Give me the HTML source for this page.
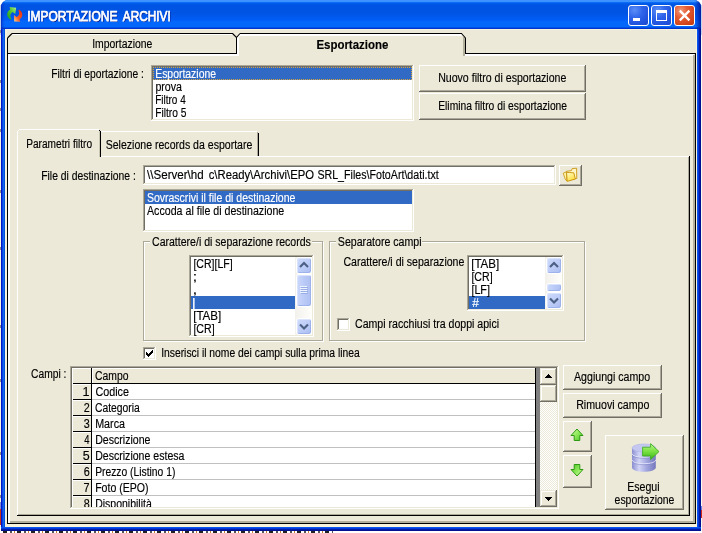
<!DOCTYPE html>
<html lang="it"><head><meta charset="utf-8"><title>IMPORTAZIONE ARCHIVI</title>
<style>
html,body{margin:0;padding:0}
body{width:702px;height:533px;overflow:hidden;position:relative;background:#fff;font-family:"Liberation Sans",sans-serif}
#root{position:absolute;left:0;top:0;width:702px;height:533px;overflow:hidden;will-change:transform}
#root div,#root svg,#root span{position:absolute;display:block}
.t{white-space:pre;transform-origin:0 0;font-family:"Liberation Sans",sans-serif;-webkit-text-stroke:0.15px currentColor}
#win{left:1px;top:0;width:700px;height:531px;border-radius:7px 7px 0 0;
 background:linear-gradient(90deg,#0019CF 0,#0019CF 1px,#0A45E0 1px,#0A45E0 2px,#1666EE 2px,#1666EE 3px,#0050E0 3px,#0050E0 696px,#0A55F0 696px,#0A55F0 697px,#0538D8 697px,#0538D8 698px,#001CA8 698px,#001CA8 699px,#001090 699px)}
#wbot{left:1px;top:527px;width:700px;height:4px;background:linear-gradient(180deg,#0A55F0 0,#0A55F0 1px,#0538D8 1px,#0538D8 2px,#001CA8 2px,#001CA8 3px,#001090 3px)}
#tbar{left:1px;top:0;width:700px;height:29px;border-radius:7px 7px 0 0;
 background:linear-gradient(180deg,#3C92FF 0,#3C92FF 2px,#0A6CF5 2.5px,#005CEB 3.5px,#0056E4 4.5px,#0054E3 5.5px,#0054E3 13px,#005DF6 20px,#0467FC 21.5px,#0467FC 26.5px,#0052E4 27.5px,#0033CF 28.5px,#0033CF 29px)}
#tbarL{left:1px;top:0;width:12px;height:29px;border-radius:7px 0 0 0;background:linear-gradient(90deg,rgba(0,24,170,0.75) 0,rgba(0,40,200,0.35) 1.5px,rgba(0,60,220,0) 4px)}
#tbarR{left:661px;top:0;width:40px;height:29px;border-radius:0 7px 0 0;background:linear-gradient(90deg,rgba(0,20,150,0) 0,rgba(0,20,150,0) 34px,rgba(0,20,150,0.55) 38px,rgba(0,16,140,0.8) 40px)}
</style></head>
<body><div id="root">
<div style="left:0px;top:0px;width:702px;height:533px;background:#fff;"></div>
<div style="left:0px;top:6px;width:1px;height:521px;background:#F6F3E4;"></div>
<div style="left:0px;top:5px;width:1px;height:30px;background:#C4D4F0;"></div>
<div style="left:0px;top:30px;width:1px;height:3px;background:#8A8A8A;"></div>
<div style="left:0px;top:80px;width:1px;height:3px;background:#8A8A8A;"></div>
<div style="left:0px;top:108px;width:1px;height:3px;background:#8A8A8A;"></div>
<div style="left:0px;top:129px;width:1px;height:3px;background:#8A8A8A;"></div>
<div style="left:0px;top:190px;width:1px;height:3px;background:#8A8A8A;"></div>
<div style="left:0px;top:247px;width:1px;height:3px;background:#8A8A8A;"></div>
<div style="left:0px;top:325px;width:1px;height:3px;background:#8A8A8A;"></div>
<div style="left:0px;top:379px;width:1px;height:3px;background:#8A8A8A;"></div>
<div style="left:0px;top:452px;width:1px;height:3px;background:#8A8A8A;"></div>
<div style="left:0px;top:495px;width:1px;height:3px;background:#8A8A8A;"></div>
<div style="left:0px;top:502px;width:1px;height:7px;background:#8088D8;"></div>
<div style="left:0px;top:509px;width:1px;height:16px;background:#C83018;"></div>
<div style="left:701px;top:6px;width:1px;height:525px;background:#FBFAF2;"></div>
<div style="left:701px;top:5px;width:1px;height:30px;background:#C4D4F0;"></div>
<div style="left:701px;top:506px;width:1px;height:4px;background:#7080E0;"></div>
<div style="left:701px;top:510px;width:1px;height:8px;background:#D02818;"></div>
<div style="left:3px;top:531px;width:330px;height:2px;background:repeating-linear-gradient(90deg,#222 0 4px,#fff 4px 7px,#555 7px 9px,#fff 9px 11px,#C08030 11px 12px,#fff 12px 14px)"></div>
<div id="win"></div>
<div id="wbot"></div>
<div id="tbar"></div>
<div id="tbarL"></div>
<div id="tbarR"></div>
<div style="left:5px;top:29px;width:692px;height:498px;background:#F8F3DC;"></div>
<div style="left:7px;top:30px;width:689px;height:494px;background:#ECE9D8;"></div>
<svg style="left:0;top:0" width="30" height="30" viewBox="0 0 30 30">
<defs><linearGradient id="tg" x1="0" y1="1" x2="1" y2="0"><stop offset="0" stop-color="#1E9A12"/><stop offset="0.6" stop-color="#5CC83A"/><stop offset="1" stop-color="#B4F08C"/></linearGradient>
<linearGradient id="tr" x1="1" y1="0" x2="0" y2="1"><stop offset="0" stop-color="#E8280C"/><stop offset="0.6" stop-color="#F85A20"/><stop offset="1" stop-color="#FFD890"/></linearGradient></defs>
<path d="M10.6 19.8 C6.2 17 6 12.2 10.2 9.6 L9.6 7 L16.2 7.8 L15.2 14 L12.6 12 C10 13.6 9.6 16.4 11.4 19 Z" fill="url(#tg)"/>
<path d="M19.2 9.6 C23.4 12.6 23.2 17.2 19.6 19.4 L20.2 21.8 L14.2 21.4 L14 15 L16.6 17 C19.4 15.6 19.8 13 18.4 10.4 Z" fill="url(#tr)"/>
</svg>
<span class="t" style="left:27px;top:8px;color:#fff;font-size:14px;line-height:16px;transform:translateX(0.14px) scaleX(0.8582);text-shadow:1px 1px 0 #0A1883;-webkit-text-stroke:0.75px #fff">IMPORTAZIONE </span>
<span class="t" style="left:122px;top:8px;color:#fff;font-size:14px;line-height:16px;transform:translateX(0.84px) scaleX(0.8422);text-shadow:1px 1px 0 #0A1883;-webkit-text-stroke:0.75px #fff">ARCHIVI</span>
<div style="left:628px;top:5px;width:21px;height:21px;box-sizing:border-box;border:1px solid #fff;border-radius:3px;background:radial-gradient(circle at 30% 22%,#5A8EF8 0,#2E64EA 40%,#2052DC 75%,#1C49CC 100%)"></div>
<div style="left:633px;top:18px;width:7px;height:3px;background:#fff;"></div>
<div style="left:651px;top:5px;width:21px;height:21px;box-sizing:border-box;border:1px solid #fff;border-radius:3px;background:radial-gradient(circle at 30% 22%,#5A8EF8 0,#2E64EA 40%,#2052DC 75%,#1C49CC 100%)"></div>
<div style="left:656px;top:10px;width:11px;height:11px;box-sizing:border-box;border:1px solid #fff;border-top-width:3px"></div>
<div style="left:674px;top:5px;width:21px;height:21px;box-sizing:border-box;border:1px solid #fff;border-radius:3px;background:radial-gradient(circle at 30% 25%,#F09A7C 0,#E45C34 35%,#D2441A 75%,#BC3610 100%)"></div>
<svg style="left:674px;top:5px" width="21" height="21" viewBox="0 0 21 21"><path d="M5.8 5.6 L15.4 15.4 M15.4 5.6 L5.8 15.4" stroke="#fff" stroke-width="2.3" stroke-linecap="butt"/></svg>
<svg style="left:0;top:0" width="702" height="533" viewBox="0 0 702 533" shape-rendering="crispEdges" fill="none">
<!-- white highlights -->
<path d="M9 523 V54" stroke="#fff" stroke-width="2"/>
<path d="M8 55 H237" stroke="#fff" stroke-width="2"/>
<path d="M12 34.5 H234" stroke="#fff"/>
<path d="M9.5 37 V53" stroke="#fff" stroke-opacity="0"/>
<path d="M238 56 V37" stroke="#fff" stroke-width="2"/>
<path d="M239 35 H462" stroke="#fff" stroke-width="2"/>
<path d="M465 55 H694" stroke="#fff" stroke-width="2"/>
<!-- gray shadows -->
<path d="M694 55 V523" stroke="#B3B09E" stroke-width="2"/>
<path d="M10 522 H695" stroke="#B3B09E" stroke-width="2"/>
<path d="M464 37 V56" stroke="#B3B09E" stroke-width="2"/>
<!-- black outline -->
<path d="M7.5 524 V38" stroke="#000"/>
<path d="M12 33.5 H233" stroke="#000"/>
<path d="M240 33.5 H462" stroke="#000"/>
<path d="M236.5 37 V54" stroke="#000"/>
<path d="M7 53.5 H237" stroke="#000"/>
<path d="M465.5 38 V54" stroke="#000"/>
<path d="M465 53.5 H696" stroke="#000"/>
<path d="M695.5 53 V524" stroke="#000"/>
<path d="M7 523.5 H696" stroke="#000"/>
</svg>
<svg style="left:0;top:0" width="702" height="60" viewBox="0 0 702 60" fill="none" stroke="#000" stroke-width="1.1">
<path d="M239.5 35 L237.5 38" stroke="#fff" stroke-width="1.6"/>
<path d="M7.5 38 L12 33.5"/>
<path d="M232.5 33.5 L236.5 37.5 L240 33.5"/>
<path d="M461.5 33.5 L465.5 38"/>
</svg>
<span class="t" style="left:92px;top:37px;color:#000;font-size:12px;line-height:14px;transform:translateX(0.13px) scaleX(0.8676)">Importazione</span>
<span class="t" style="left:316px;top:38px;color:#000;font-size:12px;line-height:14px;transform:translateX(0.43px) scaleX(0.9540);font-weight:bold">Esportazione</span>
<span class="t" style="left:51px;top:67px;color:#000;font-size:12px;line-height:14px;transform:translateX(0.19px) scaleX(0.8578)">Filtri di eportazione :</span>
<div style="left:151px;top:65px;width:263px;height:56px;background:#fff;"></div>
<div style="left:151px;top:65px;width:262px;height:55px;background:#ACA899;"></div>
<div style="left:152px;top:66px;width:261px;height:54px;background:#ECE9D8;"></div>
<div style="left:152px;top:66px;width:260px;height:53px;background:#716F64;"></div>
<div style="left:153px;top:67px;width:259px;height:52px;background:#fff;"></div>
<div style="left:153px;top:67px;width:259px;height:13px;background:#316AC5;outline:1px dotted #D9A53A;outline-offset:-1px"></div>
<span class="t" style="left:155px;top:67px;color:#fff;font-size:12px;line-height:14px;transform:translateX(0.18px) scaleX(0.8689)">Esportazione</span>
<span class="t" style="left:155px;top:80px;color:#000;font-size:12px;line-height:14px;transform:translateX(0.38px) scaleX(0.8873)">prova</span>
<span class="t" style="left:155px;top:93px;color:#000;font-size:12px;line-height:14px;transform:translateX(0.21px) scaleX(0.8321)">Filtro 4</span>
<span class="t" style="left:155px;top:106px;color:#000;font-size:12px;line-height:14px;transform:translateX(0.19px) scaleX(0.8506)">Filtro 5</span>
<div style="left:419px;top:65px;width:167px;height:27px;background:#716F64;"></div>
<div style="left:419px;top:65px;width:166px;height:26px;background:#fff;"></div>
<div style="left:420px;top:66px;width:165px;height:25px;background:#ACA899;"></div>
<div style="left:420px;top:66px;width:164px;height:24px;background:#ECE9D8;"></div>
<span class="t" style="left:438px;top:71px;color:#000;font-size:12px;line-height:14px;transform:translateX(0.17px) scaleX(0.8816)">Nuovo filtro di esportazione</span>
<div style="left:419px;top:93px;width:167px;height:27px;background:#716F64;"></div>
<div style="left:419px;top:93px;width:166px;height:26px;background:#fff;"></div>
<div style="left:420px;top:94px;width:165px;height:25px;background:#ACA899;"></div>
<div style="left:420px;top:94px;width:164px;height:24px;background:#ECE9D8;"></div>
<span class="t" style="left:438px;top:99px;color:#000;font-size:12px;line-height:14px;transform:translateX(0.19px) scaleX(0.8588)">Elimina filtro di esportazione</span>
<svg style="left:0;top:0" width="702" height="533" viewBox="0 0 702 533" shape-rendering="crispEdges" fill="none">
<!-- page -->
<path d="M101 156.5 H689" stroke="#fff"/>
<path d="M17.5 131 V515" stroke="#fff"/>
<path d="M688.5 157 V514.5 H18" stroke="#ACA899"/>
<path d="M689.5 156 V515.5 H17" stroke="#000"/>
<!-- tab 1 (selected) -->
<path d="M19 129.5 H99" stroke="#fff"/>
<path d="M18.5 130 V131" stroke="#fff"/>
<path d="M99.5 130 V131" stroke="#000"/>
<path d="M99.5 131 V157" stroke="#C9C6B4"/>
<path d="M100.5 131 V157" stroke="#000"/>
<!-- tab 2 -->
<path d="M101 131.5 H257" stroke="#fff"/>
<path d="M257.5 132 V156" stroke="#ACA899"/>
<path d="M258.5 133 V156" stroke="#000"/>
</svg>
<span class="t" style="left:26px;top:137px;color:#000;font-size:12px;line-height:14px;transform:translateX(0.20px) scaleX(0.8436)">Parametri filtro</span>
<span class="t" style="left:105px;top:138px;color:#000;font-size:12px;line-height:14px;transform:translateX(0.70px) scaleX(0.8793)">Selezione records da esportare</span>
<span class="t" style="left:41px;top:169px;color:#000;font-size:12px;line-height:14px;transform:translateX(0.18px) scaleX(0.8646)">File di destinazione :</span>
<div style="left:143px;top:165px;width:413px;height:20px;background:#fff;"></div>
<div style="left:143px;top:165px;width:412px;height:19px;background:#ACA899;"></div>
<div style="left:144px;top:166px;width:411px;height:18px;background:#ECE9D8;"></div>
<div style="left:144px;top:166px;width:410px;height:17px;background:#716F64;"></div>
<div style="left:145px;top:167px;width:409px;height:16px;background:#fff;"></div>
<span class="t" style="left:147px;top:168px;color:#000;font-size:12px;line-height:14px;transform:translateX(0.09px) scaleX(0.9640)">\\Server\hd </span>
<span class="t" style="left:208px;top:168px;color:#000;font-size:12px;line-height:14px;transform:translateX(0.71px) scaleX(0.9401)">c\Ready\Archivi\EPO </span>
<span class="t" style="left:317px;top:168px;color:#000;font-size:12px;line-height:14px;transform:translateX(0.38px) scaleX(0.8877)">SRL_Files\FotoArt\dati.txt</span>
<div style="left:559px;top:165px;width:23px;height:21px;background:#716F64;"></div>
<div style="left:559px;top:165px;width:22px;height:20px;background:#fff;"></div>
<div style="left:560px;top:166px;width:21px;height:19px;background:#ACA899;"></div>
<div style="left:560px;top:166px;width:20px;height:18px;background:#ECE9D8;"></div>
<svg style="left:546px;top:160px" width="44" height="30" viewBox="0 0 44 30">
<defs><linearGradient id="ff" x1="0" y1="0" x2="0.6" y2="1"><stop offset="0" stop-color="#FFFDE0"/><stop offset="0.5" stop-color="#FFEE80"/><stop offset="1" stop-color="#FFD93A"/></linearGradient></defs>
<path d="M20.2 11.4 L25.4 10.6 L26.2 8.6 L30.6 8.2 L30.8 18.4 L21.4 20.6 Z" fill="#FFF6C8" stroke="#C8940C" stroke-width="0.9" stroke-linejoin="round"/>
<path d="M17.2 13.2 L20.4 12 L21 21 L19.4 19.6 Z" fill="#FFF0A8" stroke="#C8940C" stroke-width="0.8" stroke-linejoin="round"/>
<path d="M20.6 12.4 L27.8 12.8 L29.4 19 L21.2 21.4 Z" fill="url(#ff)" stroke="#C8940C" stroke-width="0.9" stroke-linejoin="round"/>
</svg>
<div style="left:143px;top:189px;width:271px;height:43px;background:#fff;"></div>
<div style="left:143px;top:189px;width:270px;height:42px;background:#ACA899;"></div>
<div style="left:144px;top:190px;width:269px;height:41px;background:#ECE9D8;"></div>
<div style="left:144px;top:190px;width:268px;height:40px;background:#716F64;"></div>
<div style="left:145px;top:191px;width:267px;height:39px;background:#fff;"></div>
<div style="left:145px;top:191px;width:267px;height:13px;background:#316AC5;"></div>
<span class="t" style="left:146px;top:191px;color:#fff;font-size:12px;line-height:14px;transform:translateX(0.88px) scaleX(0.8765)">Sovrascrivi il file di destinazione</span>
<span class="t" style="left:147px;top:204px;color:#000;font-size:12px;line-height:14px;transform:translateX(0.02px) scaleX(0.8868)">Accoda al file di destinazione</span>
<div style="left:144px;top:242px;width:180px;height:100px;background:transparent;border:1px solid #fff;box-sizing:border-box"></div>
<div style="left:143px;top:241px;width:180px;height:100px;background:transparent;border:1px solid #ACA899;box-sizing:border-box"></div>
<div style="left:150px;top:236px;width:162px;height:12px;background:#ECE9D8;"></div>
<span class="t" style="left:152px;top:235px;color:#000;font-size:12px;line-height:14px;transform:translateX(0.02px) scaleX(0.8787)">Carattere/i di separazione records</span>
<div style="left:189px;top:255px;width:125px;height:82px;background:#fff;"></div>
<div style="left:189px;top:255px;width:124px;height:81px;background:#ACA899;"></div>
<div style="left:190px;top:256px;width:123px;height:80px;background:#ECE9D8;"></div>
<div style="left:190px;top:256px;width:122px;height:79px;background:#716F64;"></div>
<div style="left:191px;top:257px;width:121px;height:78px;background:#fff;"></div>
<div style="left:295px;top:257px;width:17px;height:78px;background:linear-gradient(90deg,#F3F1EC,#FEFEFB);"></div>
<div style="left:191px;top:296px;width:104px;height:13px;background:#316AC5;"></div>
<span class="t" style="left:193px;top:257px;color:#000;font-size:12px;line-height:14px;transform:translateX(0.43px) scaleX(0.8766)">[CR][LF]</span>
<span class="t" style="left:192px;top:270px;color:#000;font-size:12px;line-height:14px;transform:translateX(0.70px) scaleX(1.3000)">;</span>
<span class="t" style="left:192px;top:283px;color:#000;font-size:12px;line-height:14px;transform:translateX(0.70px) scaleX(1.3000)">,</span>
<span class="t" style="left:191px;top:296px;color:#fff;font-size:12px;line-height:14px;transform:translateX(0.70px) scaleX(1.3000)">|</span>
<span class="t" style="left:193px;top:309px;color:#000;font-size:12px;line-height:14px;transform:translateX(0.16px) scaleX(0.9646)">[TAB]</span>
<span class="t" style="left:193px;top:322px;color:#000;font-size:12px;line-height:14px;transform:translateX(0.38px) scaleX(0.8847)">[CR]</span>
<div style="left:296px;top:257px;width:16px;height:17px;box-sizing:border-box;border:1px solid #fff;border-radius:3px;background:linear-gradient(135deg,#CFDBFB,#BCCCF8 55%,#AABDF0);box-shadow:inset -1px -1px 0 0 #9DB2EA,inset 1px 1px 0 0 #D9E3FC"></div>
<svg style="left:295px;top:257px" width="17" height="17" viewBox="0 0 17 17"><path d="M5 10 L9 6 L13 10" fill="none" stroke="#4D6185" stroke-width="2.2"/></svg>
<div style="left:296px;top:274px;width:16px;height:33px;box-sizing:border-box;border:1px solid #fff;border-radius:3px;background:linear-gradient(90deg,#CBD8FB,#BACAF7 50%,#AEC0F2);box-shadow:inset -1px -1px 0 0 #9DB2EA,inset 1px 1px 0 0 #D9E3FC"></div>
<div style="left:300px;top:286px;width:7px;height:1px;background:#EEF4FE;"></div>
<div style="left:301px;top:287px;width:7px;height:1px;background:#98ACE6;"></div>
<div style="left:300px;top:288px;width:7px;height:1px;background:#EEF4FE;"></div>
<div style="left:301px;top:289px;width:7px;height:1px;background:#98ACE6;"></div>
<div style="left:300px;top:290px;width:7px;height:1px;background:#EEF4FE;"></div>
<div style="left:301px;top:291px;width:7px;height:1px;background:#98ACE6;"></div>
<div style="left:300px;top:292px;width:7px;height:1px;background:#EEF4FE;"></div>
<div style="left:301px;top:293px;width:7px;height:1px;background:#98ACE6;"></div>
<div style="left:296px;top:318px;width:16px;height:17px;box-sizing:border-box;border:1px solid #fff;border-radius:3px;background:linear-gradient(135deg,#CFDBFB,#BCCCF8 55%,#AABDF0);box-shadow:inset -1px -1px 0 0 #9DB2EA,inset 1px 1px 0 0 #D9E3FC"></div>
<svg style="left:295px;top:318px" width="17" height="17" viewBox="0 0 17 17"><path d="M5 6.5 L9 10.5 L13 6.5" fill="none" stroke="#4D6185" stroke-width="2.2"/></svg>
<div style="left:330px;top:242px;width:256px;height:100px;background:transparent;border:1px solid #fff;box-sizing:border-box"></div>
<div style="left:329px;top:241px;width:256px;height:100px;background:transparent;border:1px solid #ACA899;box-sizing:border-box"></div>
<div style="left:336px;top:236px;width:86px;height:12px;background:#ECE9D8;"></div>
<span class="t" style="left:337px;top:235px;color:#000;font-size:12px;line-height:14px;transform:translateX(0.82px) scaleX(0.8849)">Separatore campi</span>
<span class="t" style="left:343px;top:255px;color:#000;font-size:12px;line-height:14px;transform:translateX(0.39px) scaleX(0.8804)">Carattere/i di separazione</span>
<div style="left:467px;top:255px;width:97px;height:56px;background:#fff;"></div>
<div style="left:467px;top:255px;width:96px;height:55px;background:#ACA899;"></div>
<div style="left:468px;top:256px;width:95px;height:54px;background:#ECE9D8;"></div>
<div style="left:468px;top:256px;width:94px;height:53px;background:#716F64;"></div>
<div style="left:469px;top:257px;width:93px;height:52px;background:#fff;"></div>
<div style="left:545px;top:257px;width:17px;height:52px;background:linear-gradient(90deg,#F3F1EC,#FEFEFB);"></div>
<div style="left:469px;top:296px;width:76px;height:13px;background:#316AC5;"></div>
<span class="t" style="left:471px;top:257px;color:#000;font-size:12px;line-height:14px;transform:translateX(0.16px) scaleX(0.9646)">[TAB]</span>
<span class="t" style="left:471px;top:270px;color:#000;font-size:12px;line-height:14px;transform:translateX(0.38px) scaleX(0.8847)">[CR]</span>
<span class="t" style="left:471px;top:283px;color:#000;font-size:12px;line-height:14px;transform:translateX(0.38px) scaleX(0.8985)">[LF]</span>
<span class="t" style="left:472px;top:296px;color:#fff;font-size:12px;line-height:14px;transform:translateX(0.14px) scaleX(0.9978)">#</span>
<div style="left:546px;top:257px;width:16px;height:17px;box-sizing:border-box;border:1px solid #fff;border-radius:3px;background:linear-gradient(135deg,#CFDBFB,#BCCCF8 55%,#AABDF0);box-shadow:inset -1px -1px 0 0 #9DB2EA,inset 1px 1px 0 0 #D9E3FC"></div>
<svg style="left:545px;top:257px" width="17" height="17" viewBox="0 0 17 17"><path d="M5 10 L9 6 L13 10" fill="none" stroke="#4D6185" stroke-width="2.2"/></svg>
<div style="left:546px;top:283px;width:16px;height:9px;box-sizing:border-box;border:1px solid #fff;border-radius:3px;background:linear-gradient(90deg,#CBD8FB,#BACAF7 50%,#AEC0F2);box-shadow:inset -1px -1px 0 0 #9DB2EA,inset 1px 1px 0 0 #D9E3FC"></div>
<div style="left:546px;top:292px;width:16px;height:17px;box-sizing:border-box;border:1px solid #fff;border-radius:3px;background:linear-gradient(135deg,#CFDBFB,#BCCCF8 55%,#AABDF0);box-shadow:inset -1px -1px 0 0 #9DB2EA,inset 1px 1px 0 0 #D9E3FC"></div>
<svg style="left:545px;top:292px" width="17" height="17" viewBox="0 0 17 17"><path d="M5 6.5 L9 10.5 L13 6.5" fill="none" stroke="#4D6185" stroke-width="2.2"/></svg>
<div style="left:337px;top:318px;width:13px;height:13px;background:#fff;"></div>
<div style="left:337px;top:318px;width:12px;height:12px;background:#ACA899;"></div>
<div style="left:338px;top:319px;width:11px;height:11px;background:#ECE9D8;"></div>
<div style="left:338px;top:319px;width:10px;height:10px;background:#716F64;"></div>
<div style="left:339px;top:320px;width:9px;height:9px;background:#fff;"></div>
<span class="t" style="left:355px;top:317px;color:#000;font-size:12px;line-height:14px;transform:translateX(0.02px) scaleX(0.8817)">Campi racchiusi tra doppi apici</span>
<div style="left:143px;top:347px;width:13px;height:13px;background:#fff;"></div>
<div style="left:143px;top:347px;width:12px;height:12px;background:#ACA899;"></div>
<div style="left:144px;top:348px;width:11px;height:11px;background:#ECE9D8;"></div>
<div style="left:144px;top:348px;width:10px;height:10px;background:#716F64;"></div>
<div style="left:145px;top:349px;width:9px;height:9px;background:#fff;"></div>
<svg style="left:143px;top:347px" width="13" height="13" viewBox="0 0 13 13" shape-rendering="crispEdges"><path d="M3 5h1v3h-1zM4 6h1v3h-1zM5 7h1v3h-1zM6 6h1v3h-1zM7 5h1v3h-1zM8 4h1v3h-1zM9 3h1v3h-1z" fill="#000"/></svg>
<span class="t" style="left:161px;top:346px;color:#000;font-size:12px;line-height:14px;transform:translateX(0.14px) scaleX(0.8609)">Inserisci il nome dei campi sulla prima linea</span>
<span class="t" style="left:31px;top:367px;color:#000;font-size:12px;line-height:14px;transform:translateX(0.05px) scaleX(0.8543)">Campi :</span>
<div style="left:70px;top:366px;width:489px;height:143px;background:#fff;"></div>
<div style="left:70px;top:366px;width:488px;height:142px;background:#ACA899;"></div>
<div style="left:71px;top:367px;width:487px;height:141px;background:#ECE9D8;"></div>
<div style="left:71px;top:367px;width:486px;height:140px;background:#716F64;"></div>
<div style="left:72px;top:368px;width:485px;height:139px;background:#fff;"></div>
<div style="left:72px;top:368px;width:464px;height:139px;background:#fff;"></div>
<div style="left:72px;top:368px;width:464px;height:15px;background:#ECE9D8;"></div>
<div style="left:72px;top:368px;width:19px;height:139px;background:#ECE9D8;"></div>
<div style="left:72px;top:368px;width:1px;height:139px;background:#fff;"></div>
<div style="left:72px;top:368px;width:464px;height:1px;background:#fff;"></div>
<div style="left:92px;top:368px;width:1px;height:15px;background:#fff;"></div>
<div style="left:536px;top:368px;width:4px;height:139px;background:#808080;"></div>
<div style="left:92px;top:383px;width:444px;height:1px;background:#000;"></div>
<div style="left:73px;top:383px;width:19px;height:1px;background:#000;"></div>
<div style="left:72px;top:384px;width:19px;height:1px;background:#fff;"></div>
<div style="left:92px;top:399px;width:444px;height:1px;background:#C0C0C0;"></div>
<div style="left:73px;top:399px;width:19px;height:1px;background:#000;"></div>
<div style="left:72px;top:400px;width:19px;height:1px;background:#fff;"></div>
<div style="left:92px;top:415px;width:444px;height:1px;background:#C0C0C0;"></div>
<div style="left:73px;top:415px;width:19px;height:1px;background:#000;"></div>
<div style="left:72px;top:416px;width:19px;height:1px;background:#fff;"></div>
<div style="left:92px;top:431px;width:444px;height:1px;background:#C0C0C0;"></div>
<div style="left:73px;top:431px;width:19px;height:1px;background:#000;"></div>
<div style="left:72px;top:432px;width:19px;height:1px;background:#fff;"></div>
<div style="left:92px;top:447px;width:444px;height:1px;background:#C0C0C0;"></div>
<div style="left:73px;top:447px;width:19px;height:1px;background:#000;"></div>
<div style="left:72px;top:448px;width:19px;height:1px;background:#fff;"></div>
<div style="left:92px;top:463px;width:444px;height:1px;background:#C0C0C0;"></div>
<div style="left:73px;top:463px;width:19px;height:1px;background:#000;"></div>
<div style="left:72px;top:464px;width:19px;height:1px;background:#fff;"></div>
<div style="left:92px;top:479px;width:444px;height:1px;background:#C0C0C0;"></div>
<div style="left:73px;top:479px;width:19px;height:1px;background:#000;"></div>
<div style="left:72px;top:480px;width:19px;height:1px;background:#fff;"></div>
<div style="left:92px;top:495px;width:444px;height:1px;background:#C0C0C0;"></div>
<div style="left:73px;top:495px;width:19px;height:1px;background:#000;"></div>
<div style="left:72px;top:496px;width:19px;height:1px;background:#fff;"></div>
<div style="left:91px;top:368px;width:1px;height:139px;background:#000;"></div>
<div style="left:535px;top:368px;width:1px;height:139px;background:#000;"></div>
<span class="t" style="left:95px;top:369px;color:#000;font-size:12px;line-height:14px;transform:translateX(0.02px) scaleX(0.8647)">Campo</span>
<span class="t" style="left:95px;top:385px;color:#000;font-size:12px;line-height:14px;transform:translateX(0.48px) scaleX(0.8962)">Codice</span>
<span class="t" style="left:82px;top:385px;color:#000;font-size:12px;line-height:14px;transform:translateX(0.57px) scaleX(1.0529)">1</span>
<span class="t" style="left:95px;top:401px;color:#000;font-size:12px;line-height:14px;transform:translateX(0.03px) scaleX(0.8617)">Categoria</span>
<span class="t" style="left:83px;top:401px;color:#000;font-size:12px;line-height:14px;transform:translateX(0.66px) scaleX(0.9008)">2</span>
<span class="t" style="left:95px;top:417px;color:#000;font-size:12px;line-height:14px;transform:translateX(0.15px) scaleX(0.8950)">Marca</span>
<span class="t" style="left:83px;top:417px;color:#000;font-size:12px;line-height:14px;transform:translateX(0.65px) scaleX(0.8999)">3</span>
<span class="t" style="left:95px;top:433px;color:#000;font-size:12px;line-height:14px;transform:translateX(0.16px) scaleX(0.8828)">Descrizione</span>
<span class="t" style="left:84px;top:433px;color:#000;font-size:12px;line-height:14px;transform:translateX(0.29px) scaleX(0.7857)">4</span>
<span class="t" style="left:95px;top:449px;color:#000;font-size:12px;line-height:14px;transform:translateX(0.17px) scaleX(0.8803)">Descrizione estesa</span>
<span class="t" style="left:82px;top:449px;color:#000;font-size:12px;line-height:14px;transform:translateX(0.87px) scaleX(1.0381)">5</span>
<span class="t" style="left:95px;top:465px;color:#000;font-size:12px;line-height:14px;transform:translateX(0.19px) scaleX(0.8582)">Prezzo (Listino 1)</span>
<span class="t" style="left:83px;top:465px;color:#000;font-size:12px;line-height:14px;transform:translateX(0.66px) scaleX(0.9025)">6</span>
<span class="t" style="left:95px;top:481px;color:#000;font-size:12px;line-height:14px;transform:translateX(0.17px) scaleX(0.8804)">Foto (EPO)</span>
<span class="t" style="left:83px;top:481px;color:#000;font-size:12px;line-height:14px;transform:translateX(0.62px) scaleX(0.9005)">7</span>
<div style="left:0;top:0;width:702px;height:507px;overflow:hidden"><span class="t" style="left:95px;top:497px;color:#000;font-size:12px;line-height:14px;transform:translateX(0.17px) scaleX(0.8743)">Disponibilità</span></div>
<div style="left:0;top:0;width:702px;height:507px;overflow:hidden"><span class="t" style="left:83px;top:497px;color:#000;font-size:12px;line-height:14px;transform:translateX(0.64px) scaleX(0.8988)">8</span></div>
<div style="left:540px;top:368px;width:17px;height:139px;background:repeating-conic-gradient(#fff 0 25%,#ECE9D8 0 50%) 0 0/2px 2px;"></div>
<div style="left:540px;top:368px;width:17px;height:17px;background:#716F64;"></div>
<div style="left:540px;top:368px;width:16px;height:16px;background:#ECE9D8;"></div>
<div style="left:541px;top:369px;width:15px;height:15px;background:#ACA899;"></div>
<div style="left:541px;top:369px;width:14px;height:14px;background:#fff;"></div>
<div style="left:542px;top:370px;width:13px;height:13px;background:#ECE9D8;"></div>
<div style="left:540px;top:385px;width:17px;height:17px;background:#716F64;"></div>
<div style="left:540px;top:385px;width:16px;height:16px;background:#ECE9D8;"></div>
<div style="left:541px;top:386px;width:15px;height:15px;background:#ACA899;"></div>
<div style="left:541px;top:386px;width:14px;height:14px;background:#fff;"></div>
<div style="left:542px;top:387px;width:13px;height:13px;background:#ECE9D8;"></div>
<div style="left:540px;top:490px;width:17px;height:17px;background:#716F64;"></div>
<div style="left:540px;top:490px;width:16px;height:16px;background:#ECE9D8;"></div>
<div style="left:541px;top:491px;width:15px;height:15px;background:#ACA899;"></div>
<div style="left:541px;top:491px;width:14px;height:14px;background:#fff;"></div>
<div style="left:542px;top:492px;width:13px;height:13px;background:#ECE9D8;"></div>
<svg style="left:540px;top:368px" width="17" height="17" viewBox="0 0 17 17" shape-rendering="crispEdges"><path d="M8 6h1v1h-1zM7 7h3v1h-3zM6 8h5v1h-5zM5 9h7v1h-7z" fill="#000"/></svg>
<svg style="left:540px;top:490px" width="17" height="17" viewBox="0 0 17 17" shape-rendering="crispEdges"><path d="M5 7h7v1h-7zM6 8h5v1h-5zM7 9h3v1h-3zM8 10h1v1h-1z" fill="#000"/></svg>
<div style="left:563px;top:365px;width:99px;height:25px;background:#716F64;"></div>
<div style="left:563px;top:365px;width:98px;height:24px;background:#fff;"></div>
<div style="left:564px;top:366px;width:97px;height:23px;background:#ACA899;"></div>
<div style="left:564px;top:366px;width:96px;height:22px;background:#ECE9D8;"></div>
<span class="t" style="left:574px;top:370px;color:#000;font-size:12px;line-height:14px;transform:translateX(0.02px) scaleX(0.8835)">Aggiungi campo</span>
<div style="left:563px;top:393px;width:99px;height:25px;background:#716F64;"></div>
<div style="left:563px;top:393px;width:98px;height:24px;background:#fff;"></div>
<div style="left:564px;top:394px;width:97px;height:23px;background:#ACA899;"></div>
<div style="left:564px;top:394px;width:96px;height:22px;background:#ECE9D8;"></div>
<span class="t" style="left:576px;top:398px;color:#000;font-size:12px;line-height:14px;transform:translateX(0.16px) scaleX(0.8863)">Rimuovi campo</span>
<div style="left:563px;top:421px;width:29px;height:31px;background:#716F64;"></div>
<div style="left:563px;top:421px;width:28px;height:30px;background:#fff;"></div>
<div style="left:564px;top:422px;width:27px;height:29px;background:#ACA899;"></div>
<div style="left:564px;top:422px;width:26px;height:28px;background:#ECE9D8;"></div>
<div style="left:563px;top:455px;width:29px;height:33px;background:#716F64;"></div>
<div style="left:563px;top:455px;width:28px;height:32px;background:#fff;"></div>
<div style="left:564px;top:456px;width:27px;height:31px;background:#ACA899;"></div>
<div style="left:564px;top:456px;width:26px;height:30px;background:#ECE9D8;"></div>
<svg style="left:570px;top:428px" width="14" height="14" viewBox="0 0 14 14"><defs><linearGradient id="g570428" x1="0" y1="0" x2="1" y2="1"><stop offset="0" stop-color="#D8FFA8"/><stop offset="0.5" stop-color="#8CE858"/><stop offset="1" stop-color="#48C020"/></linearGradient></defs><path d="M7 1 L13 7.5 L9.8 7.5 L9.8 12.5 L4.2 12.5 L4.2 7.5 L1 7.5 Z" fill="url(#g570428)" stroke="#2E9A14" stroke-width="1"/></svg>
<svg style="left:570px;top:463px" width="14" height="14" viewBox="0 0 14 14"><defs><linearGradient id="g570463" x1="0" y1="0" x2="1" y2="1"><stop offset="0" stop-color="#D8FFA8"/><stop offset="0.5" stop-color="#8CE858"/><stop offset="1" stop-color="#48C020"/></linearGradient></defs><path d="M7 1 L13 7.5 L9.8 7.5 L9.8 12.5 L4.2 12.5 L4.2 7.5 L1 7.5 Z" fill="url(#g570463)" stroke="#2E9A14" stroke-width="1" transform="rotate(180 7 7)"/></svg>
<div style="left:605px;top:435px;width:79px;height:75px;background:#716F64;"></div>
<div style="left:605px;top:435px;width:78px;height:74px;background:#fff;"></div>
<div style="left:606px;top:436px;width:77px;height:73px;background:#ACA899;"></div>
<div style="left:606px;top:436px;width:76px;height:72px;background:#ECE9D8;"></div>
<svg style="left:600px;top:430px" width="90" height="60" viewBox="0 0 90 60">
<defs><linearGradient id="cyl" x1="0" y1="0" x2="1" y2="0"><stop offset="0" stop-color="#8A8ED0"/><stop offset="0.3" stop-color="#D2D5F6"/><stop offset="0.6" stop-color="#A4A8E0"/><stop offset="1" stop-color="#7478BC"/></linearGradient>
<linearGradient id="ga" x1="0" y1="0" x2="0" y2="1"><stop offset="0" stop-color="#B8F888"/><stop offset="0.5" stop-color="#78E040"/><stop offset="1" stop-color="#38B018"/></linearGradient></defs>
<path d="M32 18 V37.5 C32 43.2 55.8 43.2 55.8 37.5 V18 Z" fill="url(#cyl)"/>
<ellipse cx="43.9" cy="18" rx="11.9" ry="4" fill="#C4C8F0" stroke="#A8ACE4" stroke-width="0.5"/>
<path d="M32 23.6 C32 28.6 55.8 28.6 55.8 23.6" fill="none" stroke="#E4E6FA" stroke-width="0.9"/>
<path d="M32 24.6 C32 29.6 55.8 29.6 55.8 24.6" fill="none" stroke="#7A7EC0" stroke-width="0.7" stroke-opacity="0.7"/>
<path d="M32 30 C32 35 55.8 35 55.8 30" fill="none" stroke="#E4E6FA" stroke-width="0.9"/>
<path d="M32 31 C32 36 55.8 36 55.8 31" fill="none" stroke="#7A7EC0" stroke-width="0.7" stroke-opacity="0.7"/>
<path d="M42.6 17.2 H50.6 V13.6 L59 21.6 L50.6 29.6 V26 H42.6 Z" fill="url(#ga)" stroke="#38A818" stroke-width="0.8" stroke-linejoin="round"/>
</svg>
<span class="t" style="left:627px;top:480px;color:#000;font-size:12px;line-height:14px;transform:translateX(0.16px) scaleX(0.8844)">Esegui</span>
<span class="t" style="left:614px;top:493px;color:#000;font-size:12px;line-height:14px;transform:translateX(0.58px) scaleX(0.8706)">esportazione</span>
</div></body></html>
